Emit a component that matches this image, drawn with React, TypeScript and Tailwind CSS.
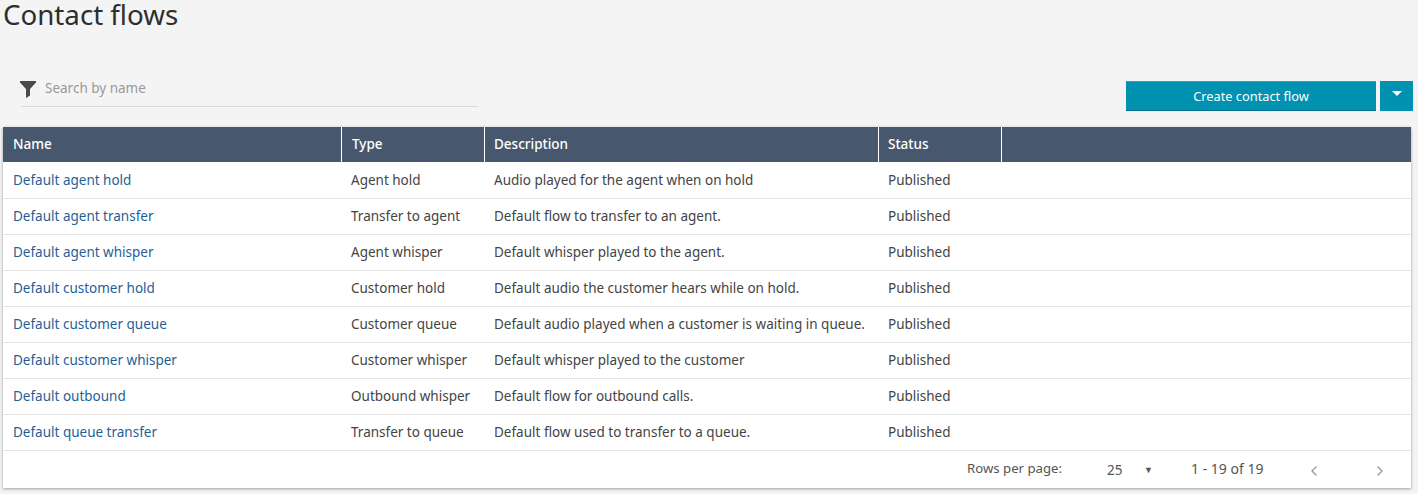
import React from "react";
import { ChevronLeft, ChevronRight } from "lucide-react";

const rows = [
  ["Default agent hold", "Agent hold", "Audio played for the agent when on hold"],
  ["Default agent transfer", "Transfer to agent", "Default flow to transfer to an agent."],
  ["Default agent whisper", "Agent whisper", "Default whisper played to the agent."],
  ["Default customer hold", "Customer hold", "Default audio the customer hears while on hold."],
  ["Default customer queue", "Customer queue", "Default audio played when a customer is waiting in queue."],
  ["Default customer whisper", "Customer whisper", "Default whisper played to the customer"],
  ["Default outbound", "Outbound whisper", "Default flow for outbound calls."],
  ["Default queue transfer", "Transfer to queue", "Default flow used to transfer to a queue."],
];

const App = () => {
  return (
    <div className="h-[494px] w-[1418px] overflow-hidden bg-[#f4f4f4] font-['Noto_Sans',sans-serif] text-[13.5px] text-[#444]">
      <h1 className="pl-[3px] text-[27.7px] leading-[28px] text-[#2e2e2e]">Contact flows</h1>

      <div className="mt-[43px] flex h-[56px] items-start justify-between pl-[21px] pr-[5px]">
        <div className="flex h-[36px] w-[457px] items-center gap-[9px] border-b border-[#d9d9d9]">
          <svg viewBox="0 0 16 17" className="-ml-px mt-[2px] h-[17px] w-[16px]">
            <path d="M0 0H16V1.5L10 8V14.5L6 17V8L0 1.5Z" fill="#4a4a4a" />
          </svg>
          <span className="text-[#999]">Search by name</span>
        </div>
        <div className="mt-[10px] flex gap-[4px]">
          <button className="h-[30px] w-[250px] border-b border-t border-b-[#00728f] border-t-[#2aa3bf] bg-[#0092b0] pt-px text-[12.8px] text-white">
            Create contact flow
          </button>
          <button className="flex h-[30px] w-[33px] justify-center bg-[#0092b0] pt-[10px]">
            <span className="h-0 w-0 border-x-[5px] border-t-[5px] border-x-transparent border-t-white"></span>
          </button>
        </div>
      </div>

      <div className="ml-[3px] w-[1408px] bg-white shadow-[0_1px_3px_rgba(0,0,0,0.35)]">
        <div className="flex h-[35px] items-center bg-[#47586e] font-medium text-white">
          <div className="flex h-full w-[339px] items-center border-r border-white pl-[10px]">Name</div>
          <div className="flex h-full w-[143px] items-center border-r border-white pl-[10px]">Type</div>
          <div className="flex h-full w-[394px] items-center border-r border-white pl-[9px]">Description</div>
          <div className="flex h-full w-[123px] items-center border-r border-white pl-[9px]">Status</div>
        </div>
        <div className="pt-px">
          {rows.map((row) => (
            <div key={row[0]} className="flex h-[36px] items-center border-b border-[#e4e4e4]">
              <div className="w-[339px] pl-[10px] text-[#1f5f99]">{row[0]}</div>
              <div className="w-[143px] pl-[9px]">{row[1]}</div>
              <div className="w-[394px] pl-[9px]">{row[2]}</div>
              <div className="w-[123px] pl-[9px]">Published</div>
            </div>
          ))}
        </div>
        <div className="flex h-[37px] items-center text-[#555]">
          <span className="ml-[964px] w-[140px] pb-[2px] text-[13.2px]">Rows per page:</span>
          <span className="w-[37px] pt-[2px]">25</span>
          <span className="w-[47px] text-[9px]">▼</span>
          <span className="w-[115px] pb-[2px] text-[14px]">1 - 19 of 19</span>
          <ChevronLeft className="mt-[2px] h-[16px] w-[16px] text-[#999]" />
          <ChevronRight className="ml-[50px] mt-[2px] h-[16px] w-[16px] text-[#999]" />
        </div>
      </div>
    </div>
  );
};

export default App;
